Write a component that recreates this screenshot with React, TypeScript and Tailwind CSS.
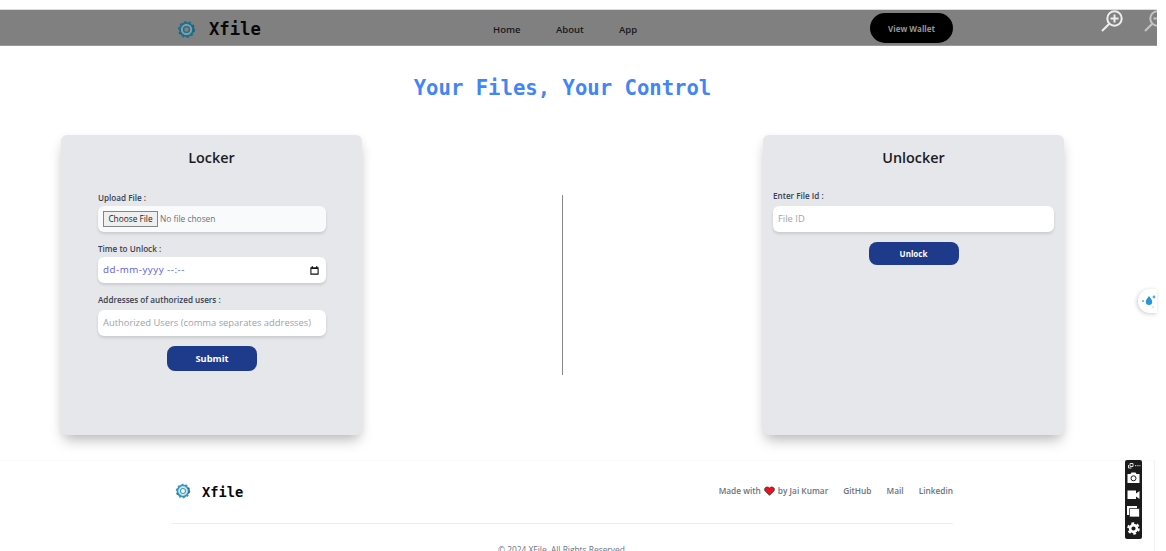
import type { ReactNode } from "react";

function Gear({ className }: { className: string }) {
  return (
    <svg viewBox="0 0 24 24" className={className} fill="none">
      <circle cx="12" cy="12" r="8.3" stroke="currentColor" strokeWidth="2.6" />
      <circle cx="12" cy="12" r="9.8" stroke="currentColor" strokeWidth="2" strokeDasharray="3 3.1" />
      <circle cx="12" cy="12" r="6" stroke="#7cc4de" strokeOpacity=".6" strokeWidth="1.8" />
      <circle cx="12" cy="12" r="3.7" stroke="currentColor" strokeWidth="1.6" />
      <path d="M20 7l1.5 5-1.5 5M3 16l3 3" stroke="#334b68" strokeWidth="1.6" strokeDasharray="2 1.5" />
    </svg>
  );
}

function Magnifier({ plus }: { plus?: boolean }) {
  return (
    <svg viewBox="0 0 22 22" className="h-[22px] w-[22px] shrink-0" fill="none" stroke="currentColor" strokeWidth="2">
      <circle cx="13.5" cy="8.5" r="7.2" />
      <path d="M8.3 13.8L1 21" />
      <path d={plus ? "M9.5 8.5h8M13.5 4.5v8" : "M9.5 8.5h8"} />
    </svg>
  );
}

function Card({ title, children }: { title: string; children: ReactNode }) {
  return (
    <section className="flex h-[300px] w-[301px] flex-col rounded-md bg-[#e5e7eb] pt-3 shadow-[0_8px_14px_-3px_rgba(0,0,0,0.25),0_2px_10px_rgba(0,0,0,0.05)]">
      <h2 className="text-center text-[14.4px] leading-[22px] font-semibold text-[#1b1b1f]">{title}</h2>
      {children}
    </section>
  );
}

function Label({ children }: { children: ReactNode }) {
  return <label className="block h-3 text-[8.15px] leading-3 font-semibold whitespace-nowrap text-[#374151]">{children}</label>;
}

const field =
  "flex h-[26px] items-center rounded-md px-[5px] text-[9.4px] whitespace-nowrap shadow-[0_2px_3px_rgba(0,0,0,0.12)]";

export default function App() {
  return (
    <div className="relative h-[551px] w-[1166px] overflow-hidden bg-white pt-[9px] font-['Open_Sans','Noto_Sans',sans-serif]">
      <header className="flex h-[37px] w-[1157px] items-center border-t border-b border-t-[#dcdcdc] border-b-[#9a9a9a] bg-[#808080] pl-[177px]">
        <Gear className="mt-[3px] h-[19px] w-[19px] text-[#216f88]" />
        <span className="mt-[3px] ml-[13px] w-[284px] font-['DejaVu_Sans_Mono',monospace] text-[17.2px] leading-5 font-bold text-[#080808]">Xfile</span>
        <nav className="flex w-[377px] pt-1 text-[9.5px] leading-4 font-semibold text-[#181818]">
          <a className="w-[63px]">Home</a>
          <a className="w-[63px]">About</a>
          <a>App</a>
        </nav>
        <button className="mt-px h-[30px] w-[83px] shrink-0 rounded-full bg-black pt-px text-[8px] font-bold text-[#969696]">View Wallet</button>
        <div className="ml-[148px] flex w-[56px] gap-[21px] self-start overflow-hidden text-[#eeeeee]">
          <Magnifier plus />
          <span className="text-[#c4c4c4]"><Magnifier /></span>
        </div>
      </header>

      <main className="w-[1125px]">
        <h1 className="mt-[28px] text-center font-['DejaVu_Sans_Mono',monospace] text-[20.6px] leading-7 font-bold text-[#4285f4]">
          Your Files, Your Control
        </h1>
        <div className="mt-[33px] flex justify-between pr-[61px] pl-[61px]">
          <Card title="Locker">
            <form className="flex flex-col pt-[23px] pr-9 pl-[37px]">
              <Label>Upload File :</Label>
              <div className={`${field} mt-[2px] bg-[#f9fafb]`}>
                <span className="flex h-4 w-[55px] items-center justify-center border border-[#858585] bg-[#efefef] text-[8.3px] text-[#222222]">Choose File</span>
                <span className="ml-[2px] text-[8.4px] text-[#6b7280]">No file chosen</span>
              </div>
              <div className="mt-[11px]"><Label>Time to Unlock :</Label></div>
              <div className={`${field} mt-[2px] justify-between bg-white text-[#6058ee]`}>
                <span className="text-[9.8px] tracking-[0.5px]">dd-mm-yyyy --:--</span>
                <svg viewBox="0 0 10 10" className="mr-[2px] h-[9px] w-[9px]" fill="none" stroke="#111">
                  <path d="M1 2h8v7H1zM1 2.8h8M2.5 0v2M7.5 0v2" strokeWidth="1.2" />
                </svg>
              </div>
              <div className="mt-[11px]"><Label>Addresses of authorized users :</Label></div>
              <div className={`${field} mt-[4px] bg-white pt-px text-[#9ca3af]`}>Authorized Users (comma separates addresses)</div>
              <button className="mt-[10px] h-[25px] w-[90px] self-center rounded-lg bg-[#1e3a8a] text-[9.3px] font-bold text-white">Submit</button>
            </form>
          </Card>
          <div className="mt-[60px] h-[180px] w-px bg-[#888888]" />
          <Card title="Unlocker">
            <form className="flex flex-col px-[10px] pt-[21px]">
              <Label>Enter File Id :</Label>
              <div className={`${field} mt-[4px] bg-white pt-px text-[#9ca3af]`}>File ID</div>
              <button className="mt-[10px] h-[23px] w-[90px] self-center rounded-lg bg-[#1e3a8a] text-[8px] font-bold text-white">Unlock</button>
            </form>
          </Card>
        </div>
      </main>

      <footer className="mt-[25px] w-[1154px] border-t border-[#fafafa] pt-[20px] pr-[201px] pl-[172px]">
        <div className="flex h-[43px] items-start justify-between border-b border-[#ededed] text-[8.3px] font-semibold text-[#6b7280]">
          <div className="flex h-5 items-center pl-[3px]">
            <Gear className="h-[16px] w-[16px] text-[#3596bd]" />
            <span className="mt-px ml-[11px] font-['DejaVu_Sans_Mono',monospace] text-[13.7px] leading-5 font-bold text-[#080808]">Xfile</span>
          </div>
          <div className="flex gap-[15px] leading-5">
            <span className="flex items-center whitespace-nowrap">
              Made with
              <svg viewBox="0 0 12 11" className="mx-[3px] h-[10px] w-[11px]">
                <path d="M6 10.3L1.2 5.5C-1 2.4 3.2-.6 6 2.2 8.8-.6 13 2.4 10.8 5.5z" fill="#e81224" stroke="#321" strokeWidth=".8" />
              </svg>
              by Jai Kumar
            </span>
            <a>GitHub</a>
            <a>Mail</a>
            <a>Linkedin</a>
          </div>
        </div>
        <p className="mt-[20px] text-center text-[8.4px] leading-3 text-[#6b7280]">© 2024 XFile. All Rights Reserved.</p>
      </footer>

      <div className="absolute top-[289px] left-[1138px] h-[24px] w-[19px] overflow-hidden rounded-l-full bg-white shadow-[-1px_1px_4px_rgba(0,0,0,0.2)]">
        <svg viewBox="0 0 19 24" className="h-6 w-[19px]" fill="#2795d9">
          <path d="M11 7c2 2.8 3.2 4 3.2 5.8a3.2 3.2 0 01-6.4 0C7.800 11 9 9.800 11 7z" />
          <circle cx="16" cy="8" r="1.4" fill="#43b0df" />
          <circle cx="5" cy="12" r="1" fill="#43b0df" />
          <circle cx="15" cy="18" r=".6" fill="#43b0df" />
        </svg>
      </div>

      <div className="absolute top-[460px] left-[1125px] h-[79px] w-[17px] rounded-[2px] bg-[#1b1b1b]">
        <svg viewBox="0 0 17 79" className="h-[79px] w-[17px]" fill="#fff">
          <path d="M5 3.500h3v3h-3zM3.500 5v3h3" fill="none" stroke="#ddd" strokeWidth="1" />
          <path d="M10 5h1.300v1.300H10zM12.200 5h1.300v1.300h-1.300zM14.400 5h1v1.300h-1z" fill="#bbb" />
          <path d="M2.500 14h3l1-1.500h4l1 1.500h3v9h-12z" />
          <circle cx="8.500" cy="18.300" r="2.500" fill="none" stroke="#1b1b1b" strokeWidth="1" />
          <path d="M2.500 30.500h8.500v3l3.500-2.500v8L11 36.500v2.500H2.500z" />
          <path d="M2 46h10v9H2z" />
          <path d="M4.500 48.500h10v8.500h-10z" stroke="#1b1b1b" strokeWidth=".7" />
          <circle cx="8.500" cy="68.500" r="3.400" fill="none" stroke="#fff" strokeWidth="2.600" />
          <circle cx="8.500" cy="68.500" r="5.300" fill="none" stroke="#fff" strokeWidth="2" strokeDasharray="2.800 2.750" />
        </svg>
      </div>
      <div className="absolute top-[460px] left-[1154px] h-[91px] w-px bg-[#f3f3f3]" />
    </div>
  );
}
